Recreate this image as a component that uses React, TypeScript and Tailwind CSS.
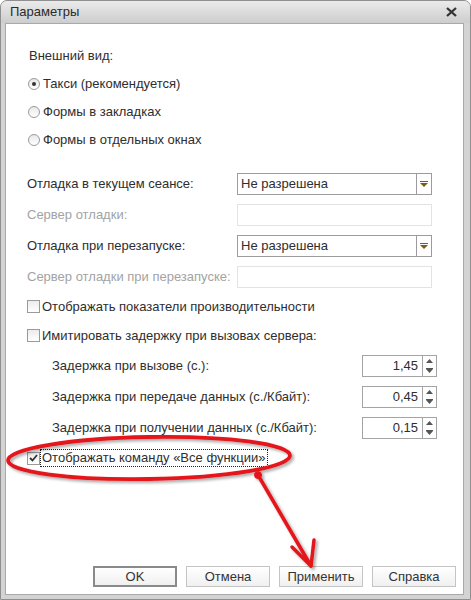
import React from 'react'

function Radio({ checked, label }: { checked?: boolean; label: string }) {
  return (
    <div className="h-[28px] flex items-center pl-[1px]">
      <span className="w-[12px] h-[12px] rounded-full border border-[#9a9a9a] bg-linear-to-b from-[#e8e8e8] to-white flex items-center justify-center">
        {checked && <span className="w-[4px] h-[4px] rounded-full bg-[#333]" />}
      </span>
      <span className="ml-[3px]">{label}</span>
    </div>
  )
}

function Check({ checked, focus, label, h }: { checked?: boolean; focus?: boolean; label: string; h: string }) {
  return (
    <div className={`${h} flex items-center`}>
      <span className="w-[13px] h-[13px] border border-[#9a9a9a] bg-linear-to-b from-[#ececec] to-white flex items-center justify-center">
        {checked && (
          <svg width="9" height="8" viewBox="0 0 9 8">
            <path d="M1 4 L3.5 6.5 L8 1" stroke="#333" strokeWidth="1.8" fill="none" />
          </svg>
        )}
      </span>
      {focus ? (
        <span className="ml-0 border border-dotted border-[#222] px-[1px] leading-[16px]">{label}</span>
      ) : (
        <span className="ml-[2px]">{label}</span>
      )}
    </div>
  )
}

function Select({ label, value }: { label: string; value: string }) {
  return (
    <div className="h-[31px] flex items-center">
      <span className="w-[210px]">{label}</span>
      <div className="w-[195px] h-[22px] border border-[#9c9c9c] flex">
        <span className="flex-1 pl-[3px] leading-[20px]">{value}</span>
        <span className="w-[15px] border-l border-[#9c9c9c] flex items-center justify-center">
          <svg width="8" height="6" viewBox="0 0 8 6">
            <rect x="0" y="0" width="8" height="1" fill="#7a5f12" />
            <polygon points="0,2 8,2 4,6" fill="#7a5f12" />
          </svg>
        </span>
      </div>
    </div>
  )
}

function Disabled({ label }: { label: string }) {
  return (
    <div className="h-[31px] flex items-center">
      <span className="w-[210px] text-[#a3a3a3]">{label}</span>
      <div className="w-[195px] h-[22px] border border-[#e3e3e3]" />
    </div>
  )
}

function Spin({ label, value }: { label: string; value: string }) {
  return (
    <div className="h-[31px] flex items-center pl-[25px]">
      <span className="flex-1">{label}</span>
      <div className="w-[75px] h-[22px] border border-[#a4a4a4] flex">
        <span className="flex-1 text-right pr-[4px] leading-[20px]">{value}</span>
        <span className="w-[14px] border-l border-[#a4a4a4] flex flex-col items-center justify-center gap-[4px]">
          <svg width="7" height="5" viewBox="0 0 7 5">
            <polygon points="0,4 7,4 3.5,0" fill="#555" />
          </svg>
          <svg width="7" height="5" viewBox="0 0 7 5">
            <rect x="0" y="0" width="7" height="1" fill="#555" />
            <polygon points="0,1 7,1 3.5,5" fill="#555" />
          </svg>
        </span>
      </div>
    </div>
  )
}

function Btn({ label, def }: { label: string; def?: boolean }) {
  return (
    <button
      className={`w-[84px] h-[21px] flex items-center justify-center bg-linear-to-b from-white to-[#f0f0f0] text-[#333] ${
        def ? 'border-2 border-[#8a8a8a]' : 'border border-[#c4c4c4]'
      }`}
    >
      {label}
    </button>
  )
}

export default function App() {
  return (
    <div className="w-[471px] h-[600px] relative bg-white font-['Liberation_Sans',Arial,sans-serif] text-[13px] text-[#2e2e2e]">
      <div className="h-full flex flex-col rounded-t-[7px] border border-[#8f8f8f] bg-[#d3d3d3]">
        <div className="h-[22px] flex items-center justify-between pl-[9px] pr-[13px] rounded-t-[6px] bg-linear-to-b from-[#ebebeb] to-[#cdcdcd]">
          <span className="text-[13px] text-[#2a2a2a]">Параметры</span>
          <svg width="11" height="10" viewBox="0 0 11 10">
            <path d="M1 1 L10 9 M10 1 L1 9" stroke="#333" strokeWidth="2.3" />
          </svg>
        </div>
        <div className="flex-1 ml-[4px] mr-[6px] mb-[4px] bg-white border border-[#a9a9a9] flex flex-col">
          <div className="pl-[21px] pr-[26px] pt-[17px]">
            <div className="h-[29px] flex items-center pl-[2px]">Внешний вид:</div>
            <Radio checked label="Такси (рекомендуется)" />
            <Radio label="Формы в закладках" />
            <Radio label="Формы в отдельных окнах" />
            <div className="mt-[14px]">
              <Select label="Отладка в текущем сеансе:" value="Не разрешена" />
              <Disabled label="Сервер отладки:" />
              <Select label="Отладка при перезапуске:" value="Не разрешена" />
              <Disabled label="Сервер отладки при перезапуске:" />
            </div>
            <Check h="h-[29px]" label="Отображать показатели производительности" />
            <Check h="h-[29px]" label="Имитировать задержку при вызовах сервера:" />
            <Spin label="Задержка при вызове (с.):" value="1,45" />
            <Spin label="Задержка при передаче данных (с./Кбайт):" value="0,45" />
            <Spin label="Задержка при получении данных (с./Кбайт):" value="0,15" />
            <Check h="h-[30px]" checked focus label="Отображать команду «Все функции»" />
          </div>
          <div className="mt-auto flex justify-end gap-[9px] pr-[7px] pb-[7px]">
            <Btn def label="OK" />
            <Btn label="Отмена" />
            <Btn label="Применить" />
            <Btn label="Справка" />
          </div>
        </div>
      </div>
      <svg className="absolute inset-0 pointer-events-none" width="471" height="600" viewBox="0 0 471 600">
        <defs>
          <filter id="sh" x="-10%" y="-10%" width="130%" height="130%">
            <feDropShadow dx="2" dy="2" stdDeviation="1.5" floodColor="#000" floodOpacity="0.35" />
          </filter>
        </defs>
        <g filter="url(#sh)" stroke="#e4161b" fill="none" strokeLinecap="round" strokeLinejoin="round">
          <ellipse cx="149" cy="458" rx="141" ry="21" strokeWidth="3.8" transform="rotate(-1 149 458)" />
          <path d="M258 475 L311 566" strokeWidth="3.5" />
          <path d="M292 547 L311 566 L314 540" strokeWidth="3.5" />
          <circle cx="258" cy="475" r="3.5" fill="#e4161b" />
        </g>
      </svg>
    </div>
  )
}
